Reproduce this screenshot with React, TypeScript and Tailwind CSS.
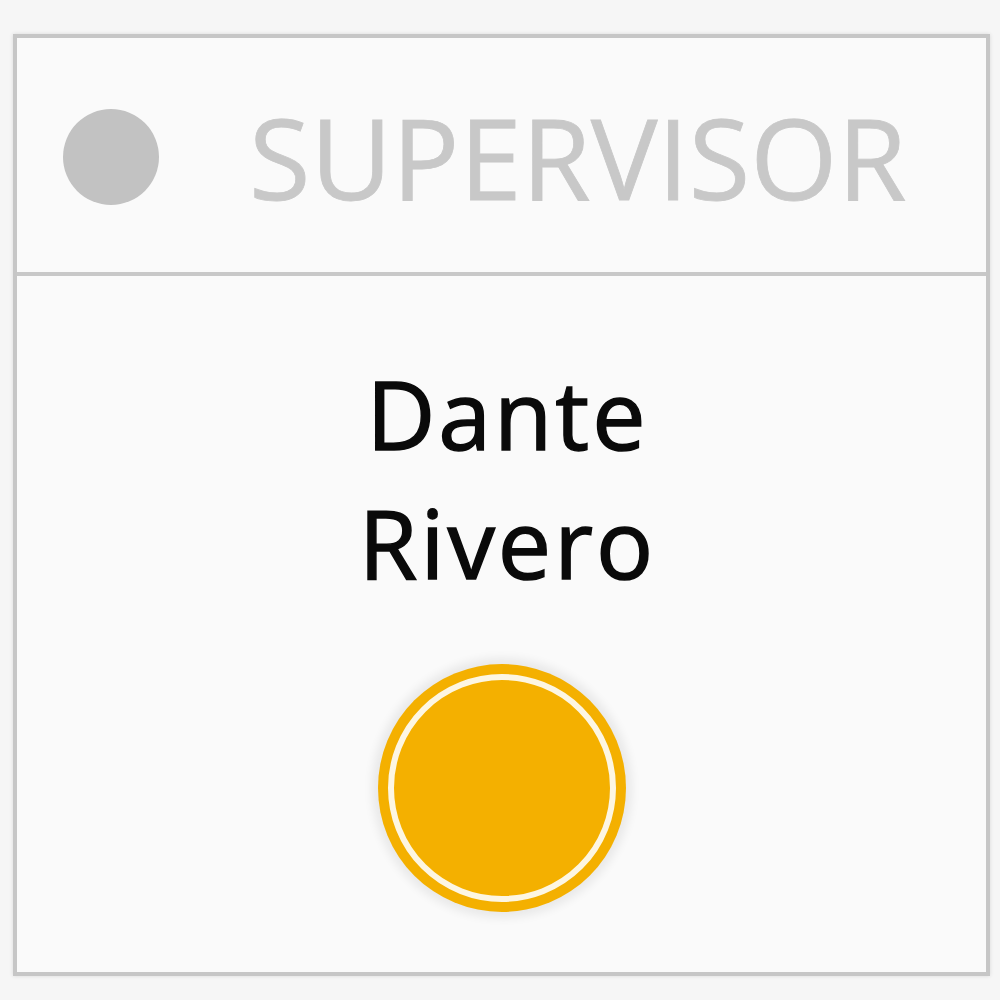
export default function App() {
  return (
    <div className="w-[1000px] h-[1000px] bg-[#f6f6f6] pt-[34px] pl-[13px] font-['Open_Sans',sans-serif]">
      <div className="w-[977px] h-[942px] bg-[#fafafa] border-[4px] border-[#c6c6c6] shadow-[0_0_4px_rgba(0,0,0,0.12)] flex flex-col">
        <div className="h-[238px] border-b-[4px] border-[#c8c8c8] flex items-center pl-[46px] pt-[4px]">
          <div className="w-[96px] h-[96px] rounded-full bg-[#c2c2c2]" />
          <span className="ml-[90px] text-[112px] leading-none text-[#c8c8c8] [-webkit-text-stroke:0.8px_#c8c8c8]">
            SUPERVISOR
          </span>
        </div>
        <div className="flex flex-col items-center pt-[73px]">
          <div className="text-[95px] leading-[129px] text-[#0a0a0a] text-center pl-[12px] tracking-[3px] [-webkit-text-stroke:1.5px_#0a0a0a]">
            <div>Dante</div>
            <div>Rivero</div>
          </div>
          <div className="mt-[57px] w-[248px] h-[248px] rounded-full bg-[#f4b000] p-[10px] shadow-[0_0_10px_6px_rgba(0,0,0,0.07)]">
            <div className="w-full h-full rounded-full border-[6px] border-[#fdf6e2] bg-[#f4b000] shadow-[0_0_2px_rgba(244,176,0,0.6)]" />
          </div>
        </div>
      </div>
    </div>
  );
}
